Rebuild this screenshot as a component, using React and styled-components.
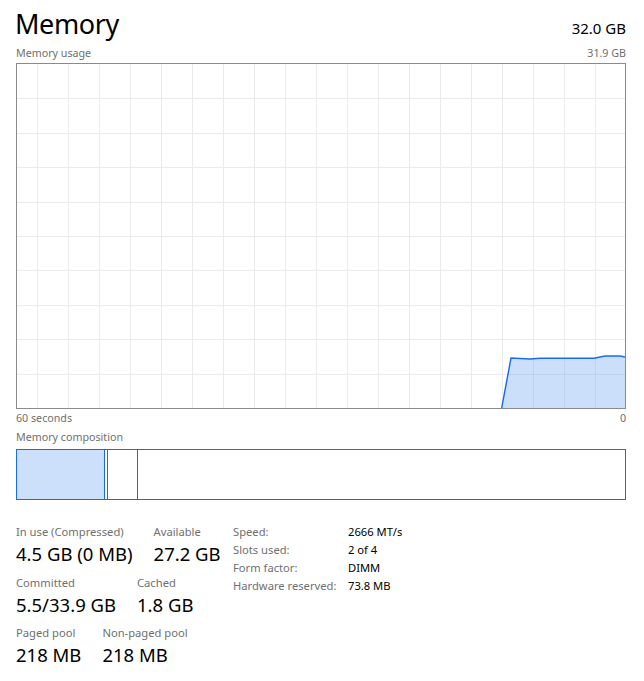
import React from 'react';
import styled, { createGlobalStyle } from 'styled-components';

const Global = createGlobalStyle`
    body {
        margin: 0;
        background: #ffffff;
        font-family: "Segoe UI", "Noto Sans", sans-serif;
        color: #000;
    }
`

const BLUE = '#1a6af0';

// grid + usage line drawn in chart units (inner box 608 x 344)
const W = 608;
const H = 344;
const vLines = Array.from({ length: 19 }, (_, i) => 20 + i * 31);
const hLines = Array.from({ length: 9 }, (_, i) => (i + 1) * 34.4);
const usage = [
    [484.7, 344], [494, 294], [513, 295], [523, 294.3],
    [577, 294.3], [588, 292], [603, 292], [608, 293],
];

const stats = [
    [
        { label: 'In use (Compressed)', value: '4.5 GB (0 MB)' },
        { label: 'Available', value: '27.2 GB' },
    ],
    [
        { label: 'Committed', value: '5.5/33.9 GB' },
        { label: 'Cached', value: '1.8 GB' },
    ],
    [
        { label: 'Paged pool', value: '218 MB' },
        { label: 'Non-paged pool', value: '218 MB' },
    ],
];

const details = [
    ['Speed:', '2666 MT/s'],
    ['Slots used:', '2 of 4'],
    ['Form factor:', 'DIMM'],
    ['Hardware reserved:', '73.8 MB'],
];

const composition = [
    { width: 88, filled: true },
    { width: 3 },
    { width: 30 },
    { grow: true },
];

export default function App() {
    const line = usage.map((p) => p.join(',')).join(' ');
    const area = `${line} ${W},${H}`;
    return (
        <>
            <Global />
            <Page>
                <Header>
                    <Title>Memory</Title>
                    <Total>32.0 GB</Total>
                </Header>
                <SubRow>
                    <span>Memory usage</span>
                    <span>31.9 GB</span>
                </SubRow>
                <Graph>
                    <svg width="100%" height="100%" viewBox={`0 0 ${W} ${H}`} preserveAspectRatio="none">
                        {vLines.map((x) => (
                            <line key={'v' + x} x1={x + 0.5} y1={0} x2={x + 0.5} y2={H} stroke="#ebebeb" strokeWidth="1" />
                        ))}
                        {hLines.map((y) => (
                            <line key={'h' + y} x1={0} y1={Math.round(y) + 0.5} x2={W} y2={Math.round(y) + 0.5} stroke="#ebebeb" strokeWidth="1" />
                        ))}
                        <polygon points={area} fill="rgba(110,165,245,0.36)" />
                        <polyline points={line} fill="none" stroke={BLUE} strokeWidth="1.4" />
                    </svg>
                </Graph>
                <AxisRow>
                    <span>60 seconds</span>
                    <span>0</span>
                </AxisRow>
                <SectionLabel>Memory composition</SectionLabel>
                <CompBar>
                    {composition.map((seg, i) => (
                        <Segment key={i} $width={seg.width} $grow={seg.grow} $filled={seg.filled} />
                    ))}
                </CompBar>
                <Stats>
                    <LeftStats>
                        {stats.map((row, i) => (
                            <StatRow key={i}>
                                {row.map((s) => (
                                    <Stat key={s.label}>
                                        <StatLabel>{s.label}</StatLabel>
                                        <StatValue>{s.value}</StatValue>
                                    </Stat>
                                ))}
                            </StatRow>
                        ))}
                    </LeftStats>
                    <Details>
                        {details.map(([k, v]) => (
                            <React.Fragment key={k}>
                                <DetailKey>{k}</DetailKey>
                                <DetailValue>{v}</DetailValue>
                            </React.Fragment>
                        ))}
                    </Details>
                </Stats>
            </Page>
        </>
    )
}

const Page = styled.div`
    width: 644px;
    height: 681px;
    box-sizing: border-box;
    padding: 10px 18px 0 16px;
    overflow: hidden;
`

const Header = styled.div`
    display: flex;
    justify-content: space-between;
    align-items: baseline;
    height: 27px;
`

const Title = styled.div`
    font-size: 27px;
    line-height: 27px;
    letter-spacing: -0.4px;
    margin-left: -1px;
`

const Total = styled.div`
    font-size: 15px;
    line-height: 27px;
`

const SubRow = styled.div`
    display: flex;
    justify-content: space-between;
    margin-top: 9px;
    font-size: 10.7px;
    line-height: 14px;
    color: #6f6f6f;
`

const Graph = styled.div`
    margin-top: 3px;
    height: 346px;
    box-sizing: border-box;
    border: 1px solid #8a8a8a;
    svg {
        display: block;
    }
`

const AxisRow = styled(SubRow)`
    margin-top: 2px;
`

const SectionLabel = styled.div`
    margin-top: 5px;
    font-size: 10.7px;
    line-height: 14px;
    color: #6f6f6f;
`

const CompBar = styled.div`
    margin-top: 5px;
    height: 51px;
    box-sizing: border-box;
    border: 1px solid ${BLUE};
    display: flex;
`

const Segment = styled.div`
    box-sizing: border-box;
    width: ${(p) => (p.$grow ? 'auto' : p.$width + 'px')};
    flex: ${(p) => (p.$grow ? '1' : 'none')};
    background: ${(p) => (p.$filled ? '#cce0fc' : 'transparent')};
    border-right: ${(p) => (p.$grow ? 'none' : `1px solid ${BLUE}`)};
`

const Stats = styled.div`
    margin-top: 23px;
    display: flex;
`

const LeftStats = styled.div`
    width: 217px;
    padding-top: 1px;
    display: flex;
    flex-direction: column;
    gap: 8.5px;
`

const StatRow = styled.div`
    display: flex;
    gap: 21px;
`

const Stat = styled.div`
    display: flex;
    flex-direction: column;
    gap: 3px;
`

const StatLabel = styled.div`
    font-size: 11.2px;
    line-height: 15px;
    color: #6f6f6f;
    white-space: nowrap;
`

const StatValue = styled.div`
    font-size: 18.5px;
    line-height: 24px;
    white-space: nowrap;
`

const Details = styled.div`
    display: grid;
    grid-template-columns: 115px auto;
    grid-auto-rows: 18px;
    align-content: start;
    font-size: 11.2px;
    line-height: 18px;
`

const DetailKey = styled.div`
    color: #6f6f6f;
    white-space: nowrap;
`

const DetailValue = styled.div`
    color: #000;
    white-space: nowrap;
`
